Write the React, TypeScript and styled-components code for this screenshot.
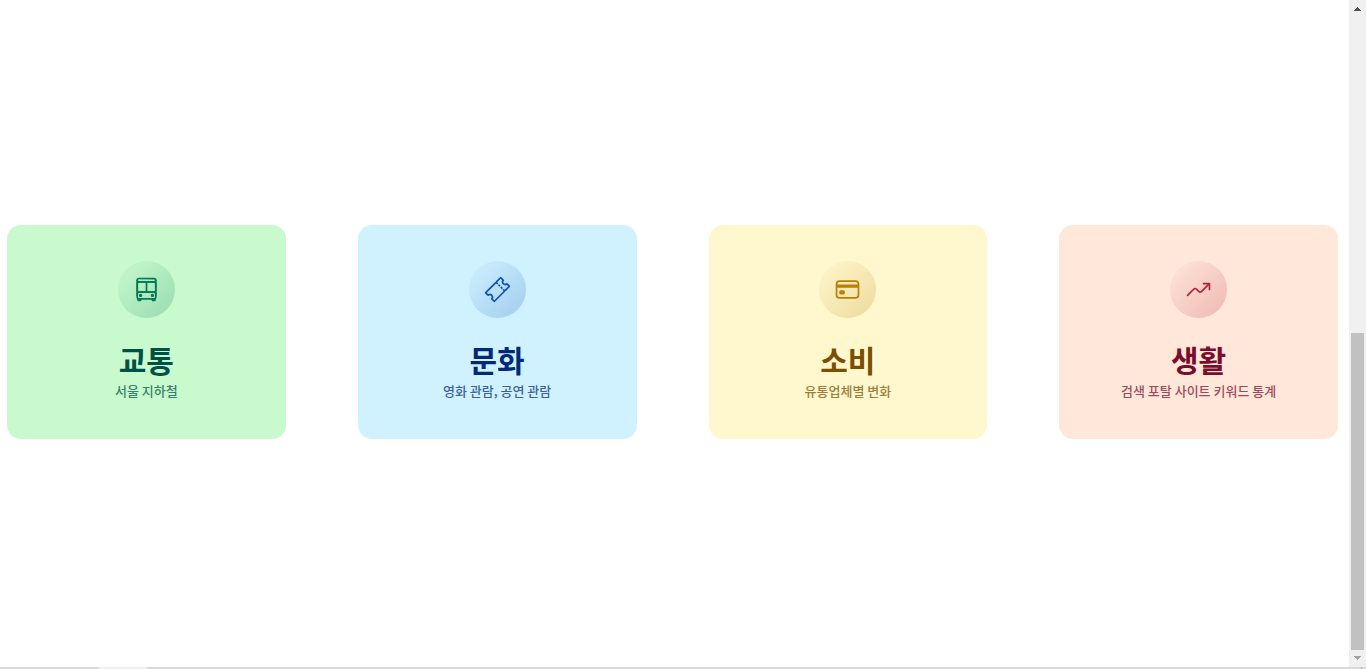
import React from "react";
import styled, { createGlobalStyle } from "styled-components";
import { IoBusOutline, IoTicketOutline, IoCardOutline, IoTrendingUp } from "react-icons/io5";
import type { IconType } from "react-icons";

const GlobalStyle = createGlobalStyle`
  *, *::before, *::after { box-sizing: border-box; }
  body {
    margin: 0;
    background: #fff;
    font-family: "Noto Sans CJK KR", "Noto Sans", sans-serif;
  }
`;

const Window = styled.div`
  display: flex;
  flex-direction: column;
  min-height: 100vh;
`;

const Body = styled.div`
  display: flex;
  flex: 1;
`;

const Content = styled.main`
  flex: 1;
  min-width: 0;
  padding: 225px 11px 0 7px;
`;

const CardGrid = styled.div`
  display: grid;
  grid-template-columns: repeat(4, minmax(0, 1fr));
  gap: 72px;
`;

const Card = styled.article<{ $bg: string; $fg: string }>`
  display: flex;
  flex-direction: column;
  align-items: center;
  padding: 36px 0 38px;
  border-radius: 14px;
  text-align: center;
  background: ${(p) => p.$bg};
  color: ${(p) => p.$fg};
`;

const IconCircle = styled.div<{ $tint: string }>`
  display: flex;
  align-items: center;
  justify-content: center;
  width: 57px;
  height: 57px;
  margin-bottom: 19px;
  border-radius: 50%;
  color: ${(p) => p.$tint};
  background: linear-gradient(135deg, ${(p) => p.$tint}00 0%, ${(p) => p.$tint}3d 100%);
`;

const Title = styled.h3`
  margin: 0;
  font-size: 30px;
  line-height: 44px;
  font-weight: 700;
`;

const Subtitle = styled.p`
  margin: 0;
  font-size: 13px;
  line-height: 20px;
  font-weight: 500;
  opacity: 0.72;
`;

const ScrollTrack = styled.div`
  display: flex;
  flex-direction: column;
  align-items: center;
  width: 17px;
  background: #f0f0f0;
`;

const ScrollArrow = styled.svg`
  display: block;
  width: 17px;
  height: 17px;
`;

const ScrollSpace = styled.div`
  flex: 316;
`;

const ScrollThumb = styled.div`
  flex: 317;
  width: 13px;
  background: #c1c1c1;
`;

const BottomEdge = styled.div`
  display: flex;
  height: 2px;
  background: #dadada;
`;

const EdgeHighlight = styled.div`
  width: 48px;
  margin-left: 99px;
  background: #f0f0f0;
`;

const EdgeTick = styled.div`
  width: 1px;
  margin: 0 4px 0 auto;
  background: #aaa;
`;

type Category = {
  title: string;
  subtitle: string;
  bg: string;
  fg: string;
  tint: string;
  Icon: IconType;
};

const categories: Category[] = [
  { title: "교통", subtitle: "서울 지하철", bg: "#c8facd", fg: "#005249", tint: "#007b55", Icon: IoBusOutline },
  { title: "문화", subtitle: "영화 관람, 공연 관람", bg: "#d0f2ff", fg: "#04297a", tint: "#0c53b7", Icon: IoTicketOutline },
  { title: "소비", subtitle: "유통업체별 변화", bg: "#fff7cd", fg: "#7a4f01", tint: "#b78103", Icon: IoCardOutline },
  { title: "생활", subtitle: "검색 포탈 사이트 키워드 통계", bg: "#ffe7d9", fg: "#7a0c2e", tint: "#b72136", Icon: IoTrendingUp },
];

export default function App() {
  return (
    <>
      <GlobalStyle />
      <Window>
        <Body>
          <Content>
            <CardGrid>
              {categories.map(({ title, subtitle, bg, fg, tint, Icon }) => (
                <Card key={title} $bg={bg} $fg={fg}>
                  <IconCircle $tint={tint}>
                    <Icon size={27} aria-hidden />
                  </IconCircle>
                  <Title>{title}</Title>
                  <Subtitle>{subtitle}</Subtitle>
                </Card>
              ))}
            </CardGrid>
          </Content>
          <ScrollTrack aria-hidden>
            <ScrollArrow viewBox="0 0 17 17" shapeRendering="crispEdges">
              <path d="M8 7h1v1h1v1h1v1h1v1H5v-1h1V9h1V8h1z" fill="#505050" />
            </ScrollArrow>
            <ScrollSpace />
            <ScrollThumb />
            <ScrollArrow viewBox="0 0 17 17" shapeRendering="crispEdges">
              <path d="M5 6h7v1h-1v1h-1v1H9v1H8V9H7V8H6V7H5z" fill="#a3a3a3" />
            </ScrollArrow>
          </ScrollTrack>
        </Body>
        <BottomEdge aria-hidden>
          <EdgeHighlight />
          <EdgeTick />
        </BottomEdge>
      </Window>
    </>
  );
}
